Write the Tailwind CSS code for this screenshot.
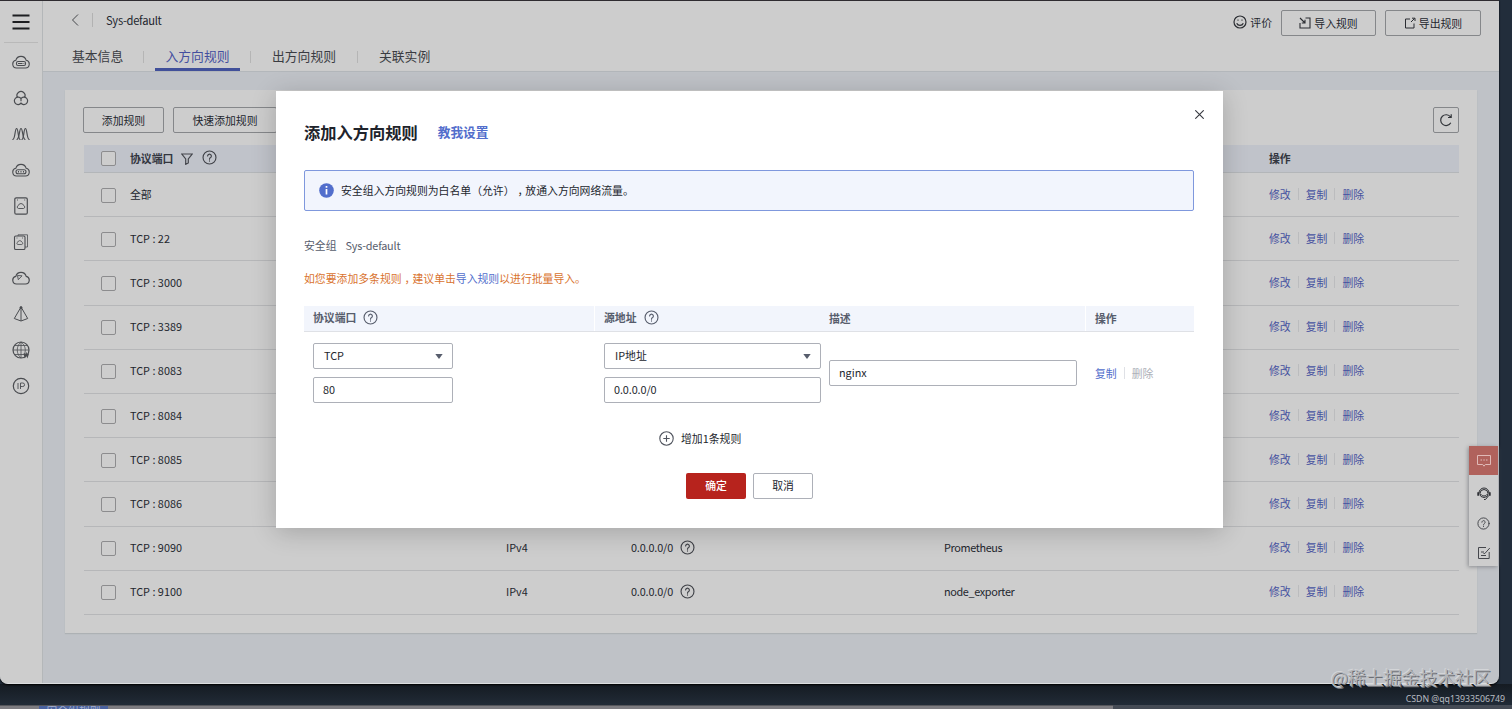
<!DOCTYPE html>
<html lang="zh-CN">
  <head>
    <meta charset="UTF-8" />
    <meta name="viewport" content="width=device-width, initial-scale=1.0" />
    <title>Sys-default - 安全组</title>
    <!-- Tailwind CSS CDN -->
    <script src="https://cdn.jsdelivr.net/npm/@tailwindcss/browser@4"></script>
  </head>
  <body class="relative w-[1512px] h-[709px] overflow-hidden bg-[#222d3b] font-['Noto_Sans_CJK_SC',sans-serif] text-[10.85px] leading-4 text-[#23262d]">
    <!-- shared icons -->
    <svg class="hidden">
      <symbol id="help" viewBox="0 0 16 16">
        <g fill="none" stroke="currentColor" stroke-width="1.2" stroke-linecap="round">
          <circle cx="8" cy="8" r="6.9" />
          <path d="M6 6.4a2 2 0 1 1 3.1 1.7C8.300 8.600 8 9 8 9.800" />
          <path d="M8 11.600v.2" />
        </g>
      </symbol>
    </svg>

    <!-- window behind -->
    <div class="absolute inset-x-0 top-[684px] h-[21px] bg-linear-to-b from-[#151b22] to-[#212b37]"></div>
    <div class="absolute inset-x-0 top-[705px] h-1 bg-[#7d7c81] border-t border-[#55565b] overflow-hidden">
      <div class="ml-[39px] w-[69px] h-1 bg-[#4a62a0] text-[#a3aecb] text-center leading-[9px] overflow-hidden">安全组规则</div>
    </div>
    <div class="absolute left-[1113px] right-0 top-[705px] h-1 bg-[#454b55]"></div>

    <!-- main window -->
    <div class="absolute left-0 top-0 w-[1499px] h-[684px] flex border-t border-[#2e2b30] border-b border-b-[#dcdee0] rounded-b-lg overflow-hidden bg-[#bfc2c7] shadow-[0_1px_2px_#000]">
      <nav class="w-[43px] shrink-0 bg-[#cdcdcd] border-r border-[#b4b7b9] flex flex-col items-center text-[#4a4c50]">
        <div class="w-[34px] h-[42px] border-b border-[#b9b9b9] flex items-center justify-center">
          <svg class="w-[18px] h-4" viewBox="0 0 18 16"><path d="M.5 1.500h17M.5 8h17M.5 14.500h17" stroke="#1d1e21" stroke-width="1.800" /></svg>
        </div>
        <div class="flex flex-col gap-[18px] pt-2.5 [&>svg]:size-[18px]">
          <svg viewBox="0 0 18 18" fill="none" stroke="currentColor" stroke-width="1.100">
            <path d="M4.500 15h9a3.900 3.900 0 0 0 .7-7.700 5.400 5.400 0 0 0-10.400 0A3.900 3.900 0 0 0 4.500 15z" />
            <rect x="4.500" y="8.500" width="9" height="4" rx="1.500" /><path d="M6 10.500h4.500M11.500 10.500h.8" />
          </svg>
          <svg viewBox="0 0 18 18" fill="none" stroke="currentColor" stroke-width="1.200">
            <path d="M5.700 8.700a4 4 0 1 1 6.600 0M9 9.600a3.700 3.700 0 1 0 0 4.500 3.700 3.700 0 1 0 0-4.500 3.700 3.700 0 0 0-2.900-1.500M9 9.600a3.700 3.700 0 0 1 2.900-1.500M9 9.600v2.700" />
          </svg>
          <svg viewBox="0 0 18 18" fill="none" stroke="currentColor" stroke-width="1.200" stroke-linecap="round">
            <path d="M.8 14.500C3.300 14 2.800 3.500 4.600 3.500S6 14 8 14.500" />
            <path d="M5 14.500C7.500 14 7.200 3.500 9 3.500S10.500 14 13 14.500" />
            <path d="M10 14.500C12 14 11.600 3.500 13.400 3.500S14.700 14 17.200 14.500" />
          </svg>
          <svg viewBox="0 0 18 18" fill="none" stroke="currentColor" stroke-width="1.100">
            <path d="M4.500 15h9a3.900 3.900 0 0 0 .7-7.700 5.400 5.400 0 0 0-10.400 0A3.900 3.900 0 0 0 4.500 15z" />
            <rect x="4" y="8.700" width="10" height="4" rx="2" /><path d="M6 10.700h1M8.500 10.700h1M11 10.700h1" stroke-width="1.500" />
          </svg>
          <svg viewBox="0 0 18 18" fill="none" stroke="currentColor" stroke-width="1.200">
            <rect x="2.800" y=".8" width="12.500" height="16.400" rx="1.500" />
            <path d="M6.500 11.500h5a1.500 1.500 0 0 0 .2-2.900 2.800 2.800 0 0 0-5.400 0 1.500 1.500 0 0 0 .2 2.900zM5 3h1M12.200 3h1" stroke-width=".9" />
          </svg>
          <svg viewBox="0 0 18 18" fill="none" stroke="currentColor" stroke-width="1.100">
            <rect x="2.500" y="3" width="10.500" height="13.500" rx="1.300" /><path d="M6 3V1.800h9.500V14H13" stroke-width=".8" />
            <path d="M5.800 11.500h4a1.200 1.200 0 0 0 .1-2.300 2.200 2.200 0 0 0-4.200 0 1.200 1.200 0 0 0 .1 2.300zM4.500 5h1M10 5h1" stroke-width=".8" />
          </svg>
          <svg viewBox="0 0 18 18" fill="none" stroke="currentColor" stroke-width="1.200">
            <path d="M4.500 15h9a3.900 3.900 0 0 0 .7-7.700 5.400 5.400 0 0 0-10.400 0A3.900 3.900 0 0 0 4.500 15z" /><path d="m5.500 6.500.8 4.200L10 6.800z" stroke-width=".9" />
          </svg>
          <svg viewBox="0 0 18 18" fill="none" stroke="currentColor" stroke-width="1">
            <path d="M9 2 2.300 13.500 9 16l6.700-2.500zM9 2v14" /><circle cx="9" cy="2.600" r="1" fill="currentColor" />
          </svg>
          <svg viewBox="0 0 18 18" fill="none" stroke="currentColor" stroke-width="1">
            <circle cx="9" cy="9" r="8" stroke-width="1.200" /><path d="M1 9h16M9 1v16M2.500 4.500h13M2.500 13.500H12M9 1C4 5 4 13 9 17M9 1c4.500 3.500 5 8 3.500 12" stroke-width=".8" /><path d="m12 12.500 1 3 1.200-3 1.200 3 1-3" stroke-width="1.300" />
          </svg>
          <svg viewBox="0 0 18 18" fill="none" stroke="currentColor" stroke-width="1.200">
            <circle cx="9" cy="9" r="7.700" /><path d="M6 6v6M8.500 12V6h2.300a1.700 1.700 0 0 1 0 3.500H8.500" stroke-width=".9" />
          </svg>
        </div>
      </nav>

      <div class="grow flex flex-col">
        <header class="h-[71px] shrink-0 bg-[#cdcdcd] border-b border-[#b3b7bb] flex justify-between">
          <div class="flex flex-col justify-between">
            <div class="flex items-center h-[38px] pl-7">
              <svg class="w-2 h-3" viewBox="0 0 8 12"><path d="M7 .5 1.500 6 7 11.500" fill="none" stroke="#44464b" /></svg>
              <i class="ml-[13px] mr-[13px] w-px h-3.5 bg-[#b2b2b2]"></i>
              <span class="text-[11.200px] tracking-[-0.3px]">Sys-default</span>
            </div>
            <div class="flex h-[27px] pl-[29px] text-[12.800px] text-[#3a3c42]">
              <span class="w-[72px] mr-3 leading-[24px] bg-[linear-gradient(#b5b5b5,#b5b5b5)] bg-size-[1px_12px] bg-position-[100%_7px] bg-no-repeat">基本信息</span>
              <span class="w-[85px] -ml-px text-center leading-[24px] text-[#444f9f] border-b-3 border-[#41509a]">入方向规则</span>
              <span class="ml-[10px] pl-[22px] w-[108px] leading-[24px] bg-[linear-gradient(#b5b5b5,#b5b5b5),linear-gradient(#b5b5b5,#b5b5b5)] bg-size-[1px_12px] bg-position-[0_7px,100%_7px] bg-no-repeat">出方向规则</span>
              <span class="ml-[21px] leading-[24px]">关联实例</span>
            </div>
          </div>
          <div class="flex items-start pt-[9px] pr-[18px]">
            <div class="flex items-center h-[24px] gap-[3px] mr-[9px]">
              <svg class="size-3.5" viewBox="0 0 14 14" fill="none" stroke="#2b2d32" stroke-width="1.200"><circle cx="7" cy="7" r="6" /><path d="M3.700 8.200a3.600 3.600 0 0 0 6.600 0M4.500 5.200h1M8.500 5.200h1" /></svg>
              评价
            </div>
            <div class="w-[95px] h-[26px] mr-[9px] rounded-xs border border-[#85878a] flex items-center justify-center gap-[3px]">
              <svg class="size-3" viewBox="0 0 12 12" fill="none" stroke="#2b2d32" stroke-width="1.100"><path d="M6.500 1H11v10H1V6M1 1l5 5M6 2.800V6H2.800" /></svg>
              导入规则
            </div>
            <div class="w-[96px] h-[26px] rounded-xs border border-[#85878a] flex items-center justify-center gap-[3px]">
              <svg class="size-3" viewBox="0 0 12 12" fill="none" stroke="#2b2d32"><path d="M6 2H1.500v9H10V6.500M7 5l3.500-3.500M8 1.200h3V4" /></svg>
              导出规则
            </div>
          </div>
        </header>

        <main class="mt-[18px] ml-[22px] w-[1412px] h-[543px] px-[18px] pt-[17px] bg-[#cdcdcd] shadow-[0_1px_1px_#adb1b4]">
          <div class="flex gap-[9px]">
            <div class="w-[81px] h-[26px] rounded-xs border border-[#85878a] leading-6 text-center">添加规则</div>
            <div class="w-[104px] h-[26px] rounded-xs border border-[#85878a] leading-6 text-center">快速添加规则</div>
            <div class="ml-auto size-[26px] rounded-xs border border-[#85878a] flex items-center justify-center">
              <svg class="size-[14px]" viewBox="0 0 14 14" fill="none" stroke="#33363b" stroke-width="1.200"><path d="M11.800 9.800A5.400 5.400 0 1 1 11.500 4M12.200 1.300v3.200H9" /></svg>
            </div>
          </div>
          <div class="mt-3 ml-px w-[1375px] h-7 flex items-center bg-[#c0c3ca] border-b border-[#b3b6b9] font-bold text-[#33363f]">
            <i class="ml-[17px] size-[15px] rounded-xs border border-[#8c8c8e] bg-[#cdcdcd]"></i>
            <span class="ml-3.5 -mt-0.5">协议端口</span>
            <svg class="ml-2 size-3" viewBox="0 0 12 12" fill="none" stroke="#44464c" stroke-width="1.200"><path d="M.8 1h10.400L7.300 6v4L4.700 11.300V6z" /></svg>
            <svg class="-mt-0.5 ml-[9px] size-[15px] text-[#3f4147]"><use href="#help" /></svg>
            <span class="ml-auto w-[190px] -mt-0.5">操作</span>
          </div>
          <div id="rules" class="ml-px w-[1375px]"></div>
        </main>
      </div>
    </div>

    <!-- floating toolbar -->
    <div class="absolute left-[1469px] top-[446px] w-[29px] h-[120px] bg-[#cdcdcd] shadow-[-1px_1px_4px_#8a8c90] flex flex-col items-center">
      <div class="w-full h-[29px] bg-[#b0625c] flex items-center justify-center">
        <svg class="w-3.5 h-3" viewBox="0 0 14 12" fill="none" stroke="#e0bab7"><path d="M.5.5h13v9H8.300L7 11.200 5.700 9.500H.5z" /><path d="M3.500 5h1.500M6.300 5h1.500M9 5h1.500" /></svg>
      </div>
      <svg class="mt-3 size-3.5" viewBox="0 0 14 14" fill="none" stroke="#2e3035"><circle cx="7" cy="6.500" r="4" /><path d="M2 6a5 5 0 0 1 10 0M4.500 7.500a2.800 2.800 0 0 0 5 0M11.800 8.500 8.500 12.500H7" /><path d="M1.300 5.200v3.500M12.700 5.200v3.500" stroke-width="2" /></svg>
      <svg class="mt-4 size-[13px] text-[#45474c]"><use href="#help" /></svg>
      <svg class="mt-4 size-3.5" viewBox="0 0 14 14" fill="none" stroke="#45474c"><path d="M9 1.500H1.500v11h10.700V6M4 6h3M4 9.500h5M6.500 7.500h1.300L12.800 2" /></svg>
    </div>

    <!-- dialog -->
    <div class="absolute left-[275.500px] top-[91px] w-[947.500px] h-[436.500px] bg-white shadow-[0_4px_24px_rgba(0,0,0,0.2)] pl-[28.500px] pt-[29px]">
      <svg class="absolute right-[19px] top-[19px] size-[9px]" viewBox="0 0 9 9"><path d="m.3.3 8.400 8.400M8.700.3.300 8.700" stroke="#35383f" stroke-width="1.100" /></svg>
      <div class="flex items-center h-6">
        <h2 class="text-[16.250px] font-bold text-[#20232b]">添加入方向规则</h2>
        <span class="ml-5 text-[12.700px] font-bold text-[#526ecc]">教我设置</span>
      </div>
      <div class="mt-[26px] w-[890px] h-[41px] rounded-xs border border-[#7f98dd] bg-[#f2f5fd] flex items-center pl-[14px]">
        <svg class="size-[15px]" viewBox="0 0 15 15"><circle cx="7.500" cy="7.500" r="7.300" fill="#526ecc" /><path d="M7.500 3v1.800M7.500 6v5.500" stroke="#fff" stroke-width="1.700" /></svg>
        <span class="ml-[7px] -mt-0.5 [text-spacing-trim:space-all]">安全组入方向规则为白名单（允许）<span class="relative left-[3px]">，</span>放通入方向网络流量。</span>
      </div>
      <p class="mt-[26px] text-[#575d6c]">安全组<span class="ml-[9px] tracking-[-0.2px]">Sys-default</span></p>
      <p class="mt-[17px] text-[#d9732f]">如您要添加多条规则<span class="relative left-[3px]">，</span>建议单击<span class="text-[#526ecc]">导入规则</span>以进行批量导入。</p>

      <div class="mt-5 w-[890px] h-[26px] flex items-center bg-[#f2f5fc] border-b border-[#dfe1e6] font-bold text-[#575d6c]">
        <div class="w-[291px] h-full pl-[9px] pb-[3px] flex items-center border-r border-white">协议端口<svg class="ml-[7px] size-[15px]"><use href="#help" /></svg></div>
        <div class="w-[225px] pl-[9px] pb-[3px] flex items-center">源地址<svg class="ml-[7px] size-[15px]"><use href="#help" /></svg></div>
        <div class="w-[266px] h-full pl-[9px] pb-px flex items-center border-r border-white">描述</div>
        <div class="pl-[9px] pb-px">操作</div>
      </div>
      <div class="mt-[11px] pl-[9px] flex items-center">
        <div class="w-[291px] flex flex-col gap-2">
          <div class="w-[140px] h-[26px] rounded-xs border border-[#adb0b8] flex items-center justify-between pl-[10px] pr-[9px]"><span class="pb-0.5">TCP</span><svg class="w-2 h-[5px]" viewBox="0 0 8 5"><path d="M.3 0h7.400L4 5z" fill="#575d6c" /></svg></div>
          <div class="w-[140px] h-[26px] rounded-xs border border-[#adb0b8] flex items-center pb-0.5 pl-[9px]">80</div>
        </div>
        <div class="w-[225px] flex flex-col gap-2">
          <div class="w-[217px] h-[26px] rounded-xs border border-[#adb0b8] flex items-center justify-between pl-[10px] pr-[9px]"><span class="pb-0.5">IP地址</span><svg class="w-2 h-[5px]" viewBox="0 0 8 5"><path d="M.3 0h7.400L4 5z" fill="#575d6c" /></svg></div>
          <div class="w-[217px] h-[26px] rounded-xs border border-[#adb0b8] flex items-center pb-0.5 pl-[9px] tracking-[-0.1px]">0.0.0.0/0</div>
        </div>
        <div class="w-[248px] h-[26px] rounded-xs border border-[#adb0b8] flex items-center pb-0.5 pl-[9px]">nginx</div>
        <div class="ml-[18px] pb-px flex items-center text-[#526ecc]">复制<i class="mx-[7px] w-px h-3 bg-[#dfe1e6]"></i><span class="text-[#adb0b8]">删除</span></div>
      </div>
      <div class="mt-[27px] ml-[355px] h-4 flex items-center gap-[7px]">
        <svg class="size-[15px]" viewBox="0 0 15 15" fill="none" stroke="#50545e" stroke-width="1.100"><circle cx="7.500" cy="7.500" r="6.700" /><path d="M4.300 7.500h6.400M7.500 4.300v6.400" /></svg>
        增加1条规则
      </div>
      <div class="mt-[27px] ml-[382px] flex gap-[7px] text-center">
        <div class="w-[60px] h-[26px] rounded-xs bg-[#b7231d] text-white leading-[25px] font-medium">确定</div>
        <div class="w-[60px] h-[26px] rounded-xs border border-[#adb0b8] leading-[23px]">取消</div>
      </div>
    </div>

    <!-- watermarks -->
    <div class="absolute right-[21px] top-[666px] text-[17.900px] leading-[22px] text-[#b4b6ba] whitespace-nowrap [text-shadow:1px_1px_0_#6d6f74,-1px_-1px_0_#d3d5d8]">@稀土掘金技术社区</div>
    <div class="absolute right-[7px] top-[692px] text-[8.750px] leading-[14px] font-['Noto_Sans',sans-serif] text-[#b9bdc2] whitespace-nowrap">CSDN @qq13933506749</div>

    <script>
      const rules = [
        ["全部"],
        ["TCP : 22"],
        ["TCP : 3000"],
        ["TCP : 3389"],
        ["TCP : 8083"],
        ["TCP : 8084"],
        ["TCP : 8085"],
        ["TCP : 8086"],
        ["TCP : 9090", "IPv4", "0.0.0.0/0", "Prometheus"],
        ["TCP : 9100", "IPv4", "0.0.0.0/0", "node_exporter"],
      ];
      document.getElementById("rules").innerHTML = rules
        .map(
          ([port, type = "", source = "", desc = ""]) => `
        <div class="h-[44.2px] flex items-center border-b border-[#b6b7b9]">
          <i class="mt-px ml-[17px] size-[15px] rounded-xs border border-[#8c8c8e]"></i>
          <span class="ml-3.5 -mt-0.5 w-[376px]">${port}</span>
          <span class="w-[125px] -mt-0.5">${type}</span>
          <span class="w-[313px] -mt-0.5 flex items-center gap-[7px] tracking-[-0.15px]">${source}${
            source && '<svg class="size-[15px] text-[#3f4147]"><use href="#help" /></svg>'
          }</span>
          <span class="-mt-0.5 tracking-[-0.35px]">${desc}</span>
          <span class="ml-auto -mt-0.5 w-[190px] flex items-center text-[#4652a0]">修改<i class="mx-[7px] w-px h-3 bg-[#bbbcbe]"></i>复制<i class="mx-[7px] w-px h-3 bg-[#bbbcbe]"></i>删除</span>
        </div>`
        )
        .join("");
    </script>
  </body>
</html>
